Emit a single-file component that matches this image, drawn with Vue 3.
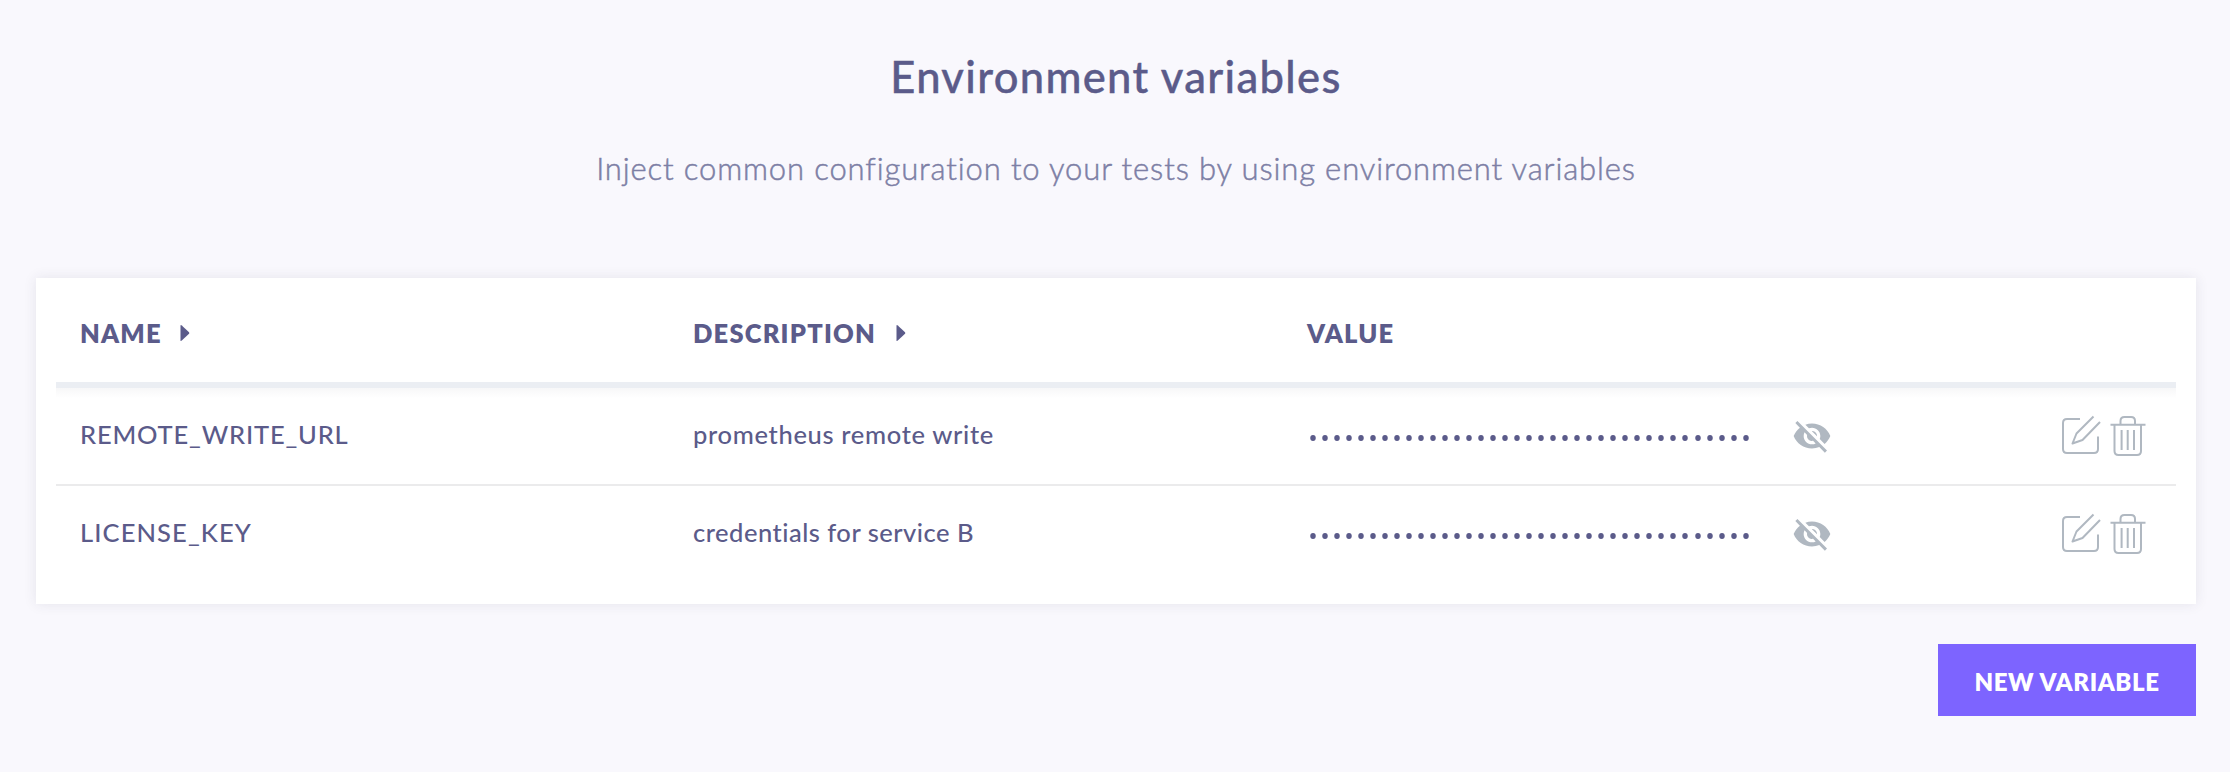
<script setup>
const rows = [
  { name: 'REMOTE_WRITE_URL', cls: 'n1', description: 'prometheus remote write', dcls: 'd1' },
  { name: 'LICENSE_KEY', cls: 'n2', description: 'credentials for service B', dcls: 'd2' },
]
const dots = 37
</script>

<template>
  <main class="page">
    <h1><span>Environment variables</span></h1>
    <p class="subtitle"><span>Inject common configuration to your tests by using environment variables</span></p>
    <section class="card">
      <div class="row head">
        <div class="cell"><span>NAME</span>
          <svg class="caret" width="10" height="18" viewBox="0 0 10 18"><path d="M.5 1.8Q.5 .3 1.8 1.4L9 8.2Q9.7 9 9 9.8L1.8 16.6Q.5 17.7 .5 16.2Z" /></svg>
        </div>
        <div class="cell"><span>DESCRIPTION</span>
          <svg class="caret wide" width="10" height="18" viewBox="0 0 10 18"><path d="M.5 1.8Q.5 .3 1.8 1.4L9 8.2Q9.7 9 9 9.8L1.8 16.6Q.5 17.7 .5 16.2Z" /></svg>
        </div>
        <div class="cell value"><span>VALUE</span></div>
      </div>
      <div v-for="r in rows" :key="r.name" class="row item">
        <div class="cell"><span :class="r.cls">{{ r.name }}</span></div>
        <div class="cell"><span :class="r.dcls">{{ r.description }}</span></div>
        <div class="cell">
          <div class="dots"><i v-for="n in dots" :key="n"></i></div>
          <svg class="eye" width="40" height="40" viewBox="0 0 24 24"><path d="M12 7c2.76 0 5 2.24 5 5 0 .65-.13 1.26-.36 1.83l2.92 2.92c1.51-1.26 2.7-2.89 3.43-4.75-1.73-4.39-6-7.5-11-7.5-1.4 0-2.74.25-3.98.7l2.16 2.16C10.74 7.13 11.35 7 12 7zM2 4.27l2.28 2.28.46.46C3.08 8.3 1.78 10.02 1 12c1.73 4.39 6 7.5 11 7.5 1.55 0 3.03-.3 4.38-.84l.42.42L19.73 22 21 20.73 3.27 3 2 4.27zM7.53 9.8l1.55 1.55c-.05.21-.08.43-.08.65 0 1.66 1.34 3 3 3 .22 0 .44-.03.65-.08l1.55 1.55c-.67.33-1.41.53-2.2.53-2.76 0-5-2.24-5-5 0-.79.2-1.53.53-2.2zm4.31-.78l3.15 3.15.02-.16c0-1.66-1.34-3-3-3l-.17.01z" /></svg>
        </div>
        <div class="actions">
          <svg width="40" height="42" viewBox="0 0 40 42"><path d="M18 5H5Q1 5 1 9V35Q1 39 5 39H32Q36 39 36 35V22.5M31.5 2.5L14.5 19.5L10.5 29.5L20.5 26L38 8" /></svg>
          <svg width="36" height="42" viewBox="0 0 36 42"><path d="M.5 10.7H35.5M10.5 10V7Q10.5 3 14.5 3H21Q25 3 25 7V10M4.5 11V37Q4.5 41 8.5 41H27Q31 41 31 37V11M11.6 16V36M17.7 16V36M24 16V36" /></svg>
        </div>
      </div>
    </section>
    <div class="footer"><button><span>NEW VARIABLE</span></button></div>
  </main>
</template>

<style>
body { background: #f9f8fd; }
</style>
<style scoped>
.page { box-sizing: border-box; width: 2230px; height: 772px; padding: 0 34px 0 36px; background: #f9f8fd; color: #5b5b8a; font-family: Lato, "Liberation Sans", sans-serif; overflow: hidden; }
h1 { margin: 0; padding-top: 46px; height: 60px; line-height: 60px; font-size: 43.5px; font-weight: 500; letter-spacing: 1.34px; text-align: center; -webkit-text-stroke: .4px #5b5b8a; }
.subtitle { margin: 0; padding-top: 40px; height: 46px; line-height: 44px; font-size: 31px; font-weight: 300; letter-spacing: .87px; color: #7d7fa5; text-align: center; -webkit-text-stroke: .5px #7d7fa5; }
.card { box-sizing: border-box; margin-top: 86px; height: 326px; padding: 0 20px; background: #fff; box-shadow: 0 0 12px rgba(50, 50, 80, .1); }
.row { display: grid; grid-template-columns: 613px 613px 613px 1fr; box-sizing: border-box; }
.cell { display: flex; align-items: center; padding-left: 24px; white-space: nowrap; font-size: 25.5px; }
.head { height: 110px; border-bottom: 6px solid #ebeef3; font-weight: 800; letter-spacing: 1.2px; }
.head .cell { padding-top: 8px; }
.head .value { padding-left: 25px; }
.caret { margin: -3px 0 0 18px; fill: #5b5b8a; }
.caret.wide { margin-left: 20px; }
.item { height: 96px; font-weight: 500; }
.item:nth-child(2) { height: 98px; border-bottom: 2px solid #ebebec; background: linear-gradient(#f7f7f8, #fff 10px); }
.cell span { margin-bottom: 2px; }
.item .cell span { margin-bottom: 4px; }
.n1 { letter-spacing: .83px; }
.n2 { letter-spacing: 1.1px; }
.d1 { letter-spacing: .67px; }
.d2 { letter-spacing: .5px; }
.dots { display: flex; gap: 6.04px; margin: 4px 0 0 3.5px; }
.dots i { width: 6px; height: 6px; border-radius: 50%; background: #5b5b8a; transform: scaleX(.92); }
.eye { margin-left: 43.5px; fill: #b0b8c1; }
.actions { display: flex; gap: 8px; align-items: center; justify-content: flex-end; padding-right: 30px; margin-top: -3px; }
.actions svg { fill: none; stroke: #b0b8c1; stroke-width: 2; stroke-linejoin: round; }
.footer { display: flex; justify-content: flex-end; padding-top: 40px; }
button { width: 258px; height: 72px; padding: 2px 0 0; border: 0; background: #7d64ff; color: #fff; font: 800 24px Lato, "Liberation Sans", sans-serif; letter-spacing: .6px; }
</style>
